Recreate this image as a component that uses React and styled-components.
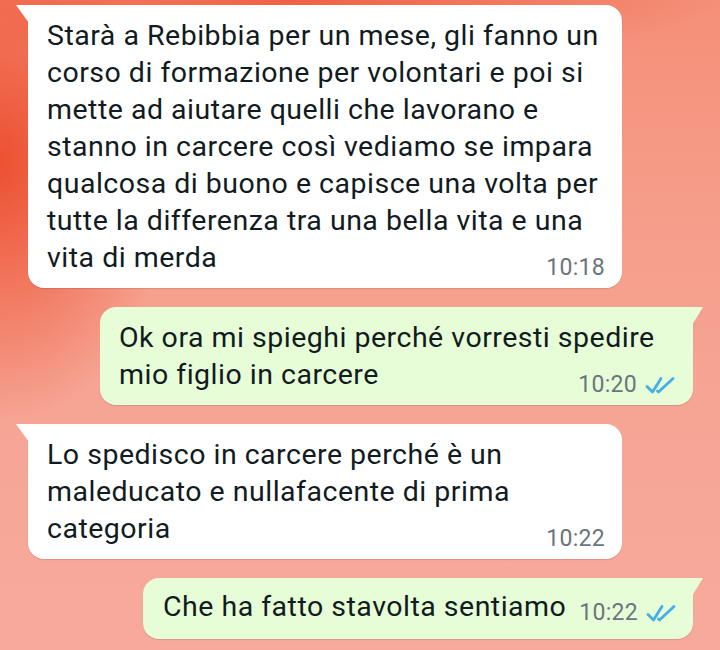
import React from "react";
import styled, { createGlobalStyle, css } from "styled-components";

const GlobalStyle = createGlobalStyle`
  html, body {
    margin: 0;
    padding: 0;
  }

  body {
    width: 720px;
    height: 650px;
    overflow: hidden;
    font-family: Roboto, "Noto Sans", sans-serif;
  }
`;

const Chat = styled.div`
  width: 720px;
  height: 650px;
  box-sizing: border-box;
  padding-top: 5px;

  display: flex;
  flex-direction: column;
  gap: 19px;

  background:
    radial-gradient(ellipse 30% 50% at 0% 25%, rgba(236, 76, 44, 0.95), rgba(236, 76, 44, 0) 80%),
    radial-gradient(ellipse 70% 12% at 40% 0%, rgba(239, 92, 62, 0.9), rgba(239, 92, 62, 0) 85%),
    linear-gradient(180deg, #f58f78 0%, #f69e8b 35%, #f6a595 65%, #f7aa9c 100%);
`;

const Bubble = styled.div`
  position: relative;
  box-sizing: border-box;
  width: ${({ $width }) => $width}px;
  padding: ${({ $compact }) => ($compact ? "10px 16px 14px 20px" : "12px 17px 8px 19px")};

  background: ${({ $out }) => ($out ? "#e7fdd7" : "#ffffff")};
  border-radius: 16px;
  box-shadow: 0 1px 1px rgba(0, 0, 0, 0.12);

  ${({ $out }) =>
    $out
      ? css`
          align-self: flex-end;
          margin-right: 27px;
          border-top-right-radius: 0;

          &::before {
            content: "";
            position: absolute;
            top: 0;
            right: -10px;
            width: 11px;
            height: 18px;
            background: #e7fdd7;
            clip-path: polygon(0 0, 100% 0, 0 100%);
          }
        `
      : css`
          align-self: flex-start;
          margin-left: 28px;
          border-top-left-radius: 0;

          &::before {
            content: "";
            position: absolute;
            top: 0;
            left: -12px;
            width: 13px;
            height: 18px;
            background: #ffffff;
            clip-path: polygon(0 0, 100% 0, 100% 100%);
          }
        `}
`;

const Row = styled.div`
  display: flex;
  align-items: flex-end;
  justify-content: space-between;
  gap: 8px;
`;

const Text = styled.div`
  font-size: 28.5px;
  line-height: 37px;
  letter-spacing: 0.5px;
  color: #111b21;
  white-space: nowrap;
`;

const Meta = styled.div`
  display: flex;
  align-items: center;
  justify-content: flex-end;
  gap: 7px;
  margin-top: ${({ $inline }) => ($inline ? "0" : "-20px")};
  height: 24px;

  font-size: 23px;
  line-height: 24px;
  letter-spacing: 0.3px;
  color: #6a757e;
`;

const Checks = () => (
  <svg width="32" height="18" viewBox="0 0 32 18" fill="none">
    <path
      d="M3 10.5 L8.5 16 L17 2.5"
      stroke="#42afe8"
      strokeWidth="2.8"
      strokeLinecap="round"
      strokeLinejoin="round"
    />
    <path
      d="M13.5 15 L14.5 16 L29 2.5"
      stroke="#42afe8"
      strokeWidth="2.8"
      strokeLinecap="round"
      strokeLinejoin="round"
    />
  </svg>
);

const Lines = ({ lines }) => (
  <Text>
    {lines.map((line, i) => (
      <React.Fragment key={i}>
        {line}
        {i < lines.length - 1 && <br />}
      </React.Fragment>
    ))}
  </Text>
);

const messages = [
  {
    out: false,
    width: 594,
    time: "10:18",
    lines: [
      "Starà a Rebibbia per un mese, gli fanno un",
      "corso di formazione per volontari e poi si",
      "mette ad aiutare quelli che lavorano e",
      "stanno in carcere così vediamo se impara",
      "qualcosa di buono e capisce una volta per",
      "tutte la differenza tra una bella vita e una",
      "vita di merda",
    ],
  },
  {
    out: true,
    width: 593,
    time: "10:20",
    lines: ["Ok ora mi spieghi perché vorresti spedire", "mio figlio in carcere"],
  },
  {
    out: false,
    width: 594,
    time: "10:22",
    lines: [
      "Lo spedisco in carcere perché è un",
      "maleducato e nullafacente di prima",
      "categoria",
    ],
  },
  {
    out: true,
    width: 550,
    time: "10:22",
    inline: true,
    lines: ["Che ha fatto stavolta sentiamo"],
  },
];

export default function App() {
  return (
    <>
      <GlobalStyle />
      <Chat>
        {messages.map((m, i) =>
          m.inline ? (
            <Bubble key={i} $out={m.out} $width={m.width} $compact>
              <Row>
                <Lines lines={m.lines} />
                <Meta $inline>
                  {m.time}
                  {m.out && <Checks />}
                </Meta>
              </Row>
            </Bubble>
          ) : (
            <Bubble key={i} $out={m.out} $width={m.width}>
              <Lines lines={m.lines} />
              <Meta>
                {m.time}
                {m.out && <Checks />}
              </Meta>
            </Bubble>
          )
        )}
      </Chat>
    </>
  );
}
